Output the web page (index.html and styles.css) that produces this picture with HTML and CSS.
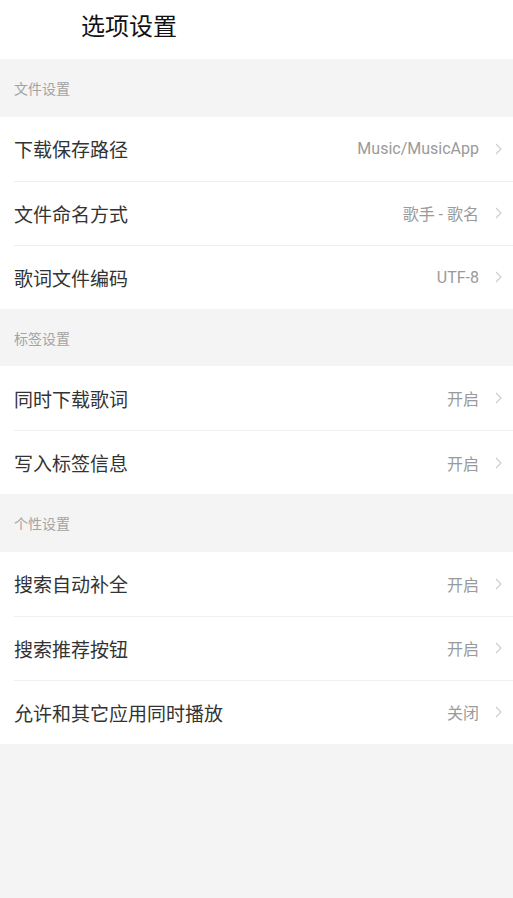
FILE: index.html
```html
<!DOCTYPE html>
<html lang="zh-CN">
<head>
  <meta charset="UTF-8">
  <meta name="viewport" content="width=device-width, initial-scale=1.0">
  <title>选项设置</title>
  <link rel="stylesheet" href="styles.css">
</head>
<body>
  <header class="top-bar">
    <h1>选项设置</h1>
  </header>

  <main>
    <div class="group-title">文件设置</div>
    <section class="group">
      <div class="row"><span class="name">下载保存路径</span><span class="value">Music/MusicApp</span><svg class="arrow" viewBox="0 0 7 12"><path d="M1 1l5 5-5 5"/></svg></div>
      <div class="row"><span class="name">文件命名方式</span><span class="value">歌手 - 歌名</span><svg class="arrow" viewBox="0 0 7 12"><path d="M1 1l5 5-5 5"/></svg></div>
      <div class="row"><span class="name">歌词文件编码</span><span class="value">UTF-8</span><svg class="arrow" viewBox="0 0 7 12"><path d="M1 1l5 5-5 5"/></svg></div>
    </section>

    <div class="group-title">标签设置</div>
    <section class="group">
      <div class="row"><span class="name">同时下载歌词</span><span class="value">开启</span><svg class="arrow" viewBox="0 0 7 12"><path d="M1 1l5 5-5 5"/></svg></div>
      <div class="row"><span class="name">写入标签信息</span><span class="value">开启</span><svg class="arrow" viewBox="0 0 7 12"><path d="M1 1l5 5-5 5"/></svg></div>
    </section>

    <div class="group-title">个性设置</div>
    <section class="group">
      <div class="row"><span class="name">搜索自动补全</span><span class="value">开启</span><svg class="arrow" viewBox="0 0 7 12"><path d="M1 1l5 5-5 5"/></svg></div>
      <div class="row"><span class="name">搜索推荐按钮</span><span class="value">开启</span><svg class="arrow" viewBox="0 0 7 12"><path d="M1 1l5 5-5 5"/></svg></div>
      <div class="row"><span class="name">允许和其它应用同时播放</span><span class="value">关闭</span><svg class="arrow" viewBox="0 0 7 12"><path d="M1 1l5 5-5 5"/></svg></div>
    </section>
  </main>
</body>
</html>
```

FILE: styles.css
```css
html, body {
  margin: 0;
  min-height: 100%;
  background-color: #f4f4f4;
}

body {
  font-family: Roboto, "Noto Sans CJK SC", sans-serif;
  color: #333;
}

.top-bar {
  height: 59px;
  background: #fff;
  display: flex;
  align-items: center;
  padding-left: 81px;
}

.top-bar h1 {
  margin: 0;
  font-size: 24px;
  font-weight: normal;
  color: #111;
  line-height: 1;
  padding-bottom: 5px;
}

.group-title {
  height: 57.5px;
  display: flex;
  align-items: center;
  padding-left: 14px;
  font-size: 14px;
  color: #a3a3a3;
  padding-top: 1px;
  box-sizing: border-box;
}

.group {
  background: #fff;
  padding-left: 14px;
}

.row {
  height: 64px;
  box-sizing: border-box;
  display: flex;
  align-items: center;
  padding-right: 11px;
}

.row + .row {
  border-top: 1px solid #efefef;
}

.name {
  flex: 1;
  font-size: 19px;
}

.value {
  font-size: 16px;
  color: #9a9a9a;
}

.arrow {
  width: 7px;
  height: 12px;
  margin-left: 16px;
  fill: none;
  stroke: #cccccc;
  stroke-width: 1.1;
}
```
